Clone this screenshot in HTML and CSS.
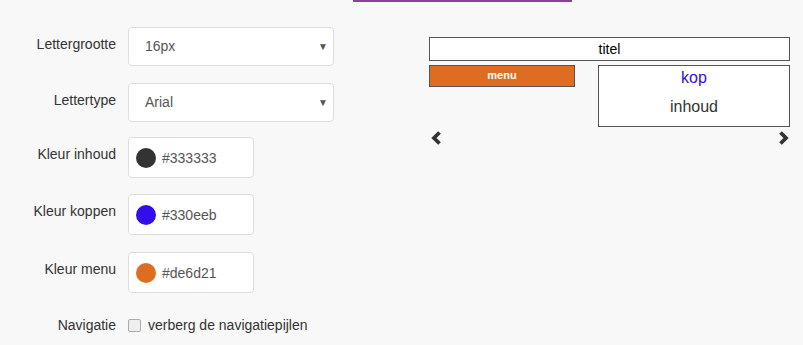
FILE: index.html
```html
<!DOCTYPE html>
<html lang="nl">
<head>
<meta charset="utf-8">
<title>Opmaak</title>
<link rel="stylesheet" href="styles.css">
</head>
<body>
<div class="topbar"></div>
<div class="main">
  <div class="form">
    <div class="row r1">
      <label class="lbl">Lettergrootte</label>
      <div class="select"><span class="val">16px</span><span class="caret">&#9660;</span></div>
    </div>
    <div class="row r2">
      <label class="lbl">Lettertype</label>
      <div class="select"><span class="val">Arial</span><span class="caret">&#9660;</span></div>
    </div>
    <div class="row r3">
      <label class="lbl">Kleur inhoud</label>
      <div class="color"><span class="dot dot-dark"></span><span class="hex">#333333</span></div>
    </div>
    <div class="row r4">
      <label class="lbl">Kleur koppen</label>
      <div class="color"><span class="dot dot-blue"></span><span class="hex">#330eeb</span></div>
    </div>
    <div class="row r5">
      <label class="lbl">Kleur menu</label>
      <div class="color"><span class="dot dot-orange"></span><span class="hex">#de6d21</span></div>
    </div>
    <div class="row r6">
      <label class="lbl lbl-nav">Navigatie</label>
      <div class="check"><span class="box"></span><span class="check-text">verberg de navigatiepijlen</span></div>
    </div>
  </div>
  <div class="preview">
    <div class="titel">titel</div>
    <div class="body-row">
      <div class="menu">menu</div>
      <div class="content">
        <div class="kop">kop</div>
        <div class="inhoud">inhoud</div>
      </div>
    </div>
    <div class="arrows">
      <svg class="arrow" width="11" height="14" viewBox="0 0 11 14"><polyline points="8.5,1.5 3,7 8.5,12.5" fill="none" stroke="#333" stroke-width="3.8"/></svg>
      <svg class="arrow" width="11" height="14" viewBox="0 0 11 14"><polyline points="2.5,1.5 8,7 2.5,12.5" fill="none" stroke="#333" stroke-width="3.8"/></svg>
    </div>
  </div>
</div>
</body>
</html>
```
FILE: styles.css
```css
html, body {
  margin: 0;
  padding: 0;
}
body {
  background: #f8f8f8;
  font-family: "Liberation Sans", Arial, sans-serif;
  font-size: 14px;
  color: #333;
  width: 803px;
  height: 345px;
  overflow: hidden;
}
.topbar {
  height: 2px;
  width: 219px;
  margin-left: 353px;
  background: #8e3d9e;
}
.main {
  display: flex;
}
.form {
  width: 429px;
  padding-top: 25px;
}
.row {
  display: grid;
  grid-template-columns: 116px auto;
  column-gap: 12px;
  align-items: start;
}
.r2 { margin-top: 17px; }
.r3 { margin-top: 15px; }
.r4 { margin-top: 16px; }
.r5 { margin-top: 17px; }
.r6 { margin-top: 22px; }
.lbl {
  text-align: right;
  line-height: 20px;
  padding-top: 7px;
  color: #333;
}
.lbl-nav {
  padding-top: 0;
}
.select {
  position: relative;
  box-sizing: border-box;
  width: 206px;
  height: 39px;
  background: #fff;
  border: 1px solid #ddd;
  border-radius: 4px;
  padding-left: 16px;
  line-height: 37px;
  color: #555;
}
.caret {
  position: absolute;
  right: 5px;
  top: 0;
  font-size: 10px;
  color: #555;
}
.color {
  box-sizing: border-box;
  width: 126px;
  height: 41px;
  background: #fff;
  border: 1px solid #ddd;
  border-radius: 4px;
  display: flex;
  align-items: center;
  padding-left: 7px;
  color: #555;
}
.dot {
  width: 20px;
  height: 20px;
  border-radius: 50%;
  margin-right: 6px;
}
.dot-dark { background: #333333; }
.dot-blue { background: #330eeb; }
.dot-orange { background: #de6d21; }
.hex {
  line-height: 20px;
}
.check {
  display: flex;
  align-items: center;
  height: 20px;
  color: #333;
}
.box {
  box-sizing: border-box;
  width: 13px;
  height: 13px;
  border: 1px solid #aaa;
  border-radius: 2px;
  background: #efefef;
  margin-right: 7px;
}
.preview {
  width: 361px;
  padding-top: 35px;
}
.titel {
  box-sizing: border-box;
  height: 24px;
  border: 1px solid #555;
  background: #fff;
  text-align: center;
  line-height: 22px;
  color: #000;
}
.body-row {
  display: flex;
  align-items: flex-start;
  margin-top: 4px;
}
.menu {
  box-sizing: border-box;
  width: 146px;
  height: 22px;
  background: #de6d21;
  border: 1px solid #555;
  color: #fff;
  font-weight: bold;
  font-size: 11px;
  text-align: center;
  line-height: 18px;
}
.content {
  box-sizing: border-box;
  margin-left: auto;
  width: 192px;
  height: 62px;
  border: 1px solid #555;
  background: #fff;
  text-align: center;
  font-size: 16px;
  padding-top: 2px;
}
.kop {
  color: #330eeb;
  line-height: 20px;
}
.inhoud {
  color: #333;
  line-height: 20px;
  margin-top: 9px;
}
.arrows {
  display: flex;
  justify-content: space-between;
  margin-top: 4px;
  padding: 0 1px 0 2px;
}
.arrow {
  display: block;
}
```
